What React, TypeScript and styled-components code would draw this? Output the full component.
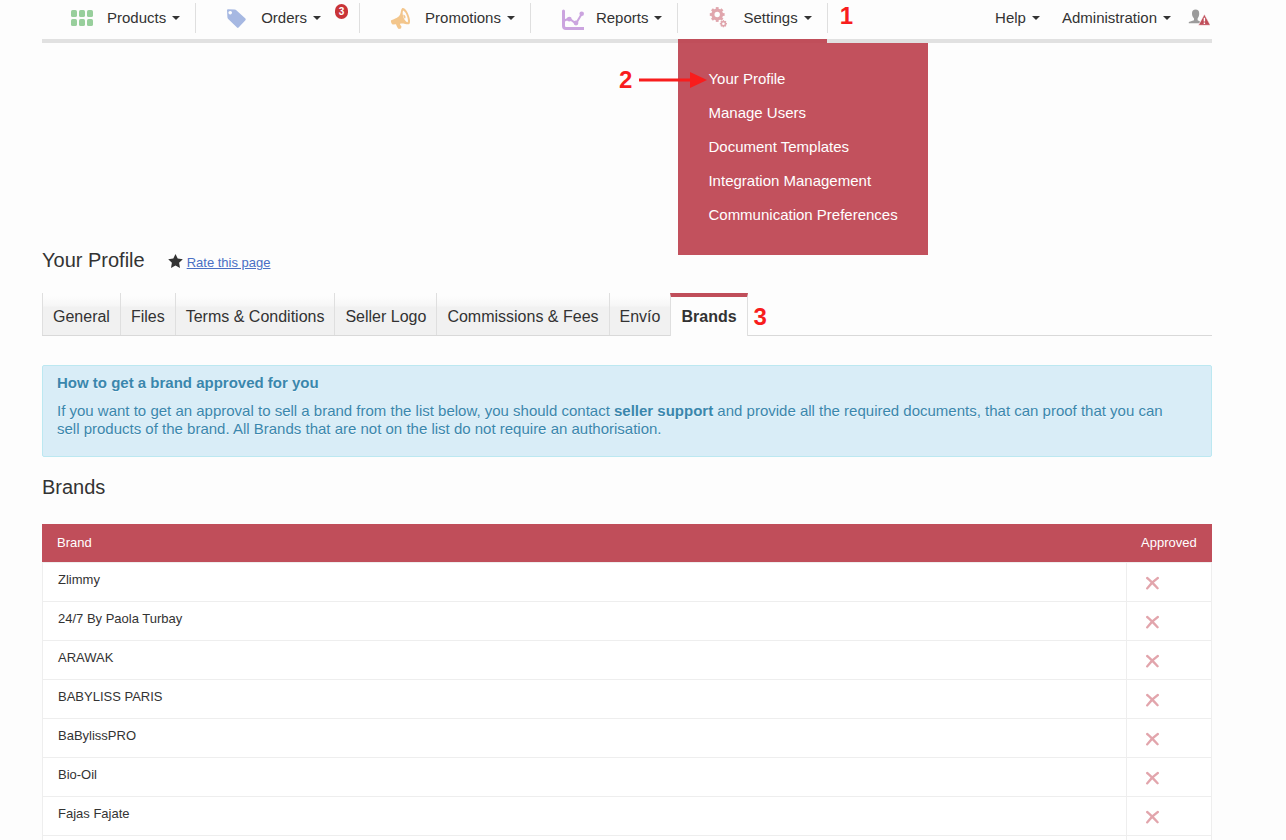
import React from "react";
import styled, { createGlobalStyle, css } from "styled-components";

const colors = {
  accent: "#c04e5a",
  menu: "#c2515d",
  line: "#dfdfdf",
  text: "#333333",
  mark: "#f81d1d",
};

const GlobalStyle = createGlobalStyle`
  *, *::before, *::after { box-sizing: border-box; }
  body {
    margin: 0;
    background: #fdfdfd;
    color: ${colors.text};
    font-family: "Liberation Sans", Arial, sans-serif;
    font-size: 15px;
    line-height: 18px;
  }
`;

const Page = styled.div`
  padding: 0 74px 0 42px;
`;

const NavBar = styled.nav`
  display: flex;
  justify-content: space-between;
  height: 43px;
  border-bottom: 4px solid #e1e1e1;
`;

const NavGroup = styled.div`
  display: flex;
`;

const NavItem = styled.div`
  position: relative;
  height: 30px;
  margin-top: 3px;
  border-right: 1px solid ${colors.line};
`;

const NavButton = styled.button<{ $plain?: boolean }>`
  display: flex;
  align-items: center;
  height: 30px;
  padding: ${(p) => (p.$plain ? "0" : "0 15px 0 29px")};
  border: 0;
  background: none;
  color: ${colors.text};
  font: inherit;
  cursor: pointer;

  > svg {
    flex: none;
    margin-right: 12px;
  }
`;

const Caret = styled.span`
  width: 8px;
  margin-left: 6px;
  border: 4px solid transparent;
  border-top-color: currentColor;
  border-bottom: 0;
`;

const Badge = styled.span`
  align-self: flex-start;
  width: 13px;
  height: 15px;
  margin: 1px -4px 0 14px;
  border-radius: 7px;
  background: #c93438;
  color: #fff;
  font-size: 10px;
  font-weight: bold;
  line-height: 15px;
  text-align: center;
`;

const UserGroup = styled(NavGroup)`
  align-items: center;
  gap: 22px;
  height: 36px;
  padding-right: 2px;
`;

const IconButton = styled.button`
  display: block;
  margin-left: -5px;
  padding: 0;
  border: 0;
  background: none;
  line-height: 0;
  cursor: pointer;
`;

const Menu = styled.ul`
  position: absolute;
  top: 40px;
  left: 0;
  margin: 0;
  padding: 19px 30px 23px;
  background: ${colors.menu};
  list-style: none;
  white-space: nowrap;

  &::before {
    content: "";
    position: absolute;
    top: -4px;
    left: 0;
    width: 149px;
    height: 4px;
    background: ${colors.accent};
  }
`;

const MenuLink = styled.a`
  display: block;
  color: #fff;
  line-height: 34px;
  text-decoration: none;
`;

const markText = css`
  color: ${colors.mark};
  font-size: 24px;
  font-weight: bold;
  line-height: 28px;
`;

const SideMark = styled.span<{ $top: number; $gap: number }>`
  ${markText}
  position: absolute;
  top: ${(p) => p.$top}px;
  left: calc(100% + ${(p) => p.$gap}px);
`;

const ArrowMark = styled.span`
  ${markText}
  position: absolute;
  top: 23px;
  right: calc(100% - 29px);
  display: flex;
  align-items: center;
  gap: 7px;
`;

const TitleRow = styled.header`
  display: flex;
  align-items: baseline;
  gap: 23px;
  margin-top: 205px;
`;

const Heading = styled.h1`
  margin: 0;
  font-size: 20px;
  font-weight: normal;
  line-height: 24px;
`;

const RateLink = styled.a`
  color: #4a6fc4;
  font-size: 13px;

  svg {
    margin-right: 4px;
    vertical-align: -1px;
  }
`;

const Tabs = styled.div`
  display: flex;
  height: 43px;
  margin-top: 21px;
  border-bottom: 1px solid #d9d9d9;
`;

const Tab = styled.button<{ $active?: boolean }>`
  position: relative;
  height: 42px;
  padding: 5px 10px 0;
  border: 0;
  border-left: 1px solid ${colors.line};
  background: linear-gradient(#fdfdfd 3px, #f6f6f6 13px, #f1f1f1 14px);
  color: ${colors.text};
  font: inherit;
  font-size: 16px;
  white-space: nowrap;
  cursor: pointer;

  ${(p) =>
    p.$active &&
    css`
      height: 43px;
      padding-top: 1px;
      border-right: 1px solid ${colors.line};
      border-top: 4px solid ${colors.accent};
      background: #fdfdfd;
      font-weight: bold;
    `}
`;

const Notice = styled.section`
  margin-top: 29px;
  padding: 8px 35px 18px 14px;
  border: 1px solid #bce8f1;
  border-radius: 2px;
  background: #d9edf7;
  color: #3a87ad;
  text-shadow: 0 1px 0 rgba(255, 255, 255, 0.5);
`;

const NoticeTitle = styled.h2`
  margin: 0 0 10px;
  font-size: 15px;
  line-height: 18px;
`;

const NoticeText = styled.p`
  margin: 0;
`;

const SectionTitle = styled.h2`
  margin: 18px 0 25px;
  font-size: 20px;
  font-weight: normal;
  line-height: 24px;
`;

const Table = styled.table`
  width: 100%;
  border-spacing: 0;
  font-size: 13px;
  line-height: 18px;
`;

const HeadCell = styled.th<{ $narrow?: boolean }>`
  width: ${(p) => (p.$narrow ? "86px" : "auto")};
  height: 38px;
  padding: 0 15px;
  background: ${colors.accent};
  color: #fff;
  font-weight: normal;
  text-align: left;
`;

const Cell = styled.td`
  height: 39px;
  padding: 8px 15px 0;
  border: 1px solid #eeeeee;
  border-width: 1px 0 0 1px;
  background: #fff;
  vertical-align: top;

  &:last-child {
    padding: 13px 18px 0;
    border-right-width: 1px;
    line-height: 0;
  }
`;

const EndCell = styled.td`
  height: 5px;
  padding: 0;
  border: 1px solid #eeeeee;
  border-width: 1px 0 0 1px;
  background: #fff;

  &:last-child {
    border-right-width: 1px;
  }
`;

const GridIcon = () => (
  <svg width="24" height="24" viewBox="0 0 24 24" fill="#98cf9c" aria-hidden="true">
    {[0, 8, 16].map((x) =>
      [4, 13].map((y) => <rect key={`${x}-${y}`} x={x} y={y} width="6" height="7" rx="1.6" />)
    )}
  </svg>
);

const TagIcon = () => (
  <svg width="24" height="24" viewBox="0 0 24 24" fill="#a6b8e2" aria-hidden="true">
    <path
      fillRule="evenodd"
      d="M2 4.2Q2 3.2 3 3.2L9.6 3.5Q10.8 3.6 11.6 4.4L20.4 12.6Q21.2 13.4 20.4 14.2L13.6 21.6Q12.8 22.4 12 21.6L3.2 13Q2.5 12.3 2.4 11.2ZM5.2 4.9a1.8 1.8 0 1 0 .01 0Z"
    />
  </svg>
);

const HornIcon = () => (
  <svg width="24" height="24" viewBox="0 0 24 24" fill="#f3c68c" aria-hidden="true">
    <path
      fillRule="evenodd"
      d="M13.1 2.3C15 1.1 17.6 4 19.3 8.2C21.2 12.8 21.8 17 20 18.2C18 18.8 15.3 17.3 11.4 17.6L11 18.4L12.5 20.4L12 22.4L9.8 23C8.5 22.2 7.7 20.2 7 18.2L4.2 18.5C2.6 18.4 1.4 15.2 2.2 14.2C5.8 12.8 9.8 11.2 11.1 8.4C12 6.4 11.8 3.6 13.1 2.3ZM14 4.6C13.3 7 13.8 10 14.8 12.2C15.7 14.3 17.5 16.2 18.8 16.2C19.3 14.3 18.6 11.2 17.5 8.7C16.5 6.5 15.2 5 14 4.6Z"
    />
    <path d="M14.2 8.8C16.2 8.6 17.4 11.4 15.8 12.8C14.8 11.6 14.4 10.4 14.2 8.8Z" />
  </svg>
);

const ChartIcon = () => (
  <svg width="24" height="24" viewBox="0 0 24 24" fill="none" stroke="#cba4df" aria-hidden="true">
    <path d="M3.5 5V20Q3.5 22.5 6 22.5H24" strokeWidth="3" strokeLinecap="round" />
    <path d="M4.5 14.5L9 12.5L16 17.5L22 7.5" strokeWidth="2" />
    <g fill="#cba4df" stroke="none">
      <circle cx="9.3" cy="13.2" r="2.4" />
      <circle cx="16" cy="17" r="2.4" />
      <circle cx="21.7" cy="7.8" r="2.3" />
    </g>
  </svg>
);

type GearProps = { cx: number; cy: number; ring: number; width: number; reach: number; tooth: number };

const Gear = ({ cx, cy, ring, width, reach, tooth }: GearProps) => (
  <g transform={`translate(${cx} ${cy})`}>
    <circle r={ring} fill="none" stroke="#e0a6ad" strokeWidth={width} />
    {[0, 45, 90, 135, 180, 225, 270, 315].map((a) => (
      <rect
        key={a}
        x={-tooth / 2}
        y={-reach}
        width={tooth}
        height={reach - ring}
        fill="#e0a6ad"
        transform={`rotate(${a})`}
      />
    ))}
  </g>
);

const GearsIcon = () => (
  <svg width="24" height="24" viewBox="0 0 24 24" aria-hidden="true">
    <Gear cx={10.2} cy={8.5} ring={4.3} width={3.2} reach={7.4} tooth={2.8} />
    <Gear cx={16.4} cy={17.7} ring={2.1} width={1.6} reach={3.6} tooth={1.3} />
  </svg>
);

const UserAlertIcon = () => (
  <svg width="22" height="18" viewBox="0 0 22 18" aria-hidden="true">
    <path
      fill="#9b9b9b"
      d="M4 4.8C3.8 2 5.4.6 7.6.6S11.4 2 11.2 4.8C11.2 7 10.4 8.4 9.6 9.4V11.2L12 12.6V14.2H.8V13L6 11.2V9.4C5 8.4 4 7 4 4.8Z"
    />
    <path fill="#c04e5a" stroke="#fdfdfd" strokeWidth=".6" d="M16.4 5.2L22.4 16.3H10.4Z" />
    <path stroke="#fff" strokeWidth="1.4" d="M16.4 8.8V12.6M16.4 13.6V15" />
  </svg>
);

const StarIcon = () => (
  <svg width="15" height="14" viewBox="0 0 15 14" fill="#333" aria-hidden="true">
    <path d="M7.5 0L9.7 4.6L14.8 5.3L11.1 8.8L12 14L7.5 11.6L3 14L3.9 8.8L.2 5.3L5.3 4.6Z" />
  </svg>
);

const CrossIcon = () => (
  <svg width="14" height="14" viewBox="0 0 14 14" role="img" aria-label="Not approved">
    <path
      d="M2.2 2C5.4 4.6 9.2 8.6 12.6 12.2M12.8 2C8.6 4.8 5 8.6 2.2 12.4"
      fill="none"
      stroke="#e2a5ac"
      strokeWidth="2.3"
      strokeLinecap="round"
    />
  </svg>
);

const Arrow = () => (
  <svg width="68" height="16" viewBox="0 0 68 16" fill={colors.mark} aria-hidden="true">
    <rect y="6.5" width="53" height="3" />
    <path d="M51 0L68 8L51 16Z" />
  </svg>
);

const navItems = [
  { label: "Products", Icon: GridIcon },
  { label: "Orders", Icon: TagIcon, badge: 3 },
  { label: "Promotions", Icon: HornIcon },
  { label: "Reports", Icon: ChartIcon },
];

const menuItems = [
  "Your Profile",
  "Manage Users",
  "Document Templates",
  "Integration Management",
  "Communication Preferences",
];

const tabs = ["General", "Files", "Terms & Conditions", "Seller Logo", "Commissions & Fees", "Envío"];

const brands = [
  "Zlimmy",
  "24/7 By Paola Turbay",
  "ARAWAK",
  "BABYLISS PARIS",
  "BaBylissPRO",
  "Bio-Oil",
  "Fajas Fajate",
];

export default function App() {
  return (
    <>
      <GlobalStyle />
      <Page>
        <NavBar>
          <NavGroup>
            {navItems.map(({ label, Icon, badge }) => (
              <NavItem key={label}>
                <NavButton>
                  <Icon />
                  {label}
                  <Caret />
                  {badge && <Badge>{badge}</Badge>}
                </NavButton>
              </NavItem>
            ))}
            <NavItem>
              <NavButton aria-expanded="true">
                <GearsIcon />
                Settings
                <Caret />
              </NavButton>
              <SideMark $top={-1} $gap={13}>1</SideMark>
              <Menu>
                {menuItems.map((item) => (
                  <li key={item}>
                    <MenuLink href="#">{item}</MenuLink>
                  </li>
                ))}
                <ArrowMark as="li">
                  2<Arrow />
                </ArrowMark>
              </Menu>
            </NavItem>
          </NavGroup>
          <UserGroup>
            <NavButton $plain>
              Help
              <Caret />
            </NavButton>
            <NavButton $plain>
              Administration
              <Caret />
            </NavButton>
            <IconButton aria-label="Account">
              <UserAlertIcon />
            </IconButton>
          </UserGroup>
        </NavBar>

        <main>
          <TitleRow>
            <Heading>Your Profile</Heading>
            <RateLink href="#">
              <StarIcon />
              Rate this page
            </RateLink>
          </TitleRow>

          <Tabs role="tablist">
            {tabs.map((tab) => (
              <Tab key={tab} role="tab">
                {tab}
              </Tab>
            ))}
            <Tab role="tab" aria-selected="true" $active>
              Brands
              <SideMark $top={6} $gap={7}>3</SideMark>
            </Tab>
          </Tabs>

          <Notice>
            <NoticeTitle>How to get a brand approved for you</NoticeTitle>
            <NoticeText>
              If you want to get an approval to sell a brand from the list below, you should contact{" "}
              <strong>seller support</strong> and provide all the required documents, that can proof that
              you can sell products of the brand. All Brands that are not on the list do not require an
              authorisation.
            </NoticeText>
          </Notice>

          <SectionTitle>Brands</SectionTitle>
          <Table>
            <thead>
              <tr>
                <HeadCell>Brand</HeadCell>
                <HeadCell $narrow>Approved</HeadCell>
              </tr>
            </thead>
            <tbody>
              {brands.map((brand) => (
                <tr key={brand}>
                  <Cell>{brand}</Cell>
                  <Cell>
                    <CrossIcon />
                  </Cell>
                </tr>
              ))}
            </tbody>
            <tfoot>
              <tr>
                <EndCell />
                <EndCell />
              </tr>
            </tfoot>
          </Table>
        </main>
      </Page>
    </>
  );
}
